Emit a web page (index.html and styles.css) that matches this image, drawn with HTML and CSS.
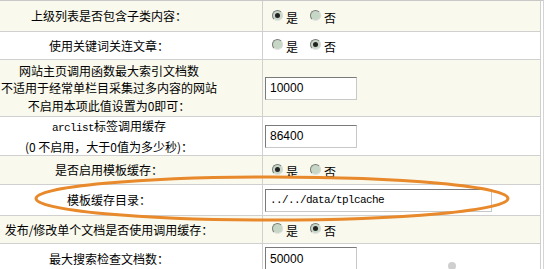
FILE: index.html
```
<!DOCTYPE html>
<html lang="zh-CN">
<head>
  <meta charset="UTF-8"/>
  <title>系统基本参数 - 性能选项</title>
  <link rel="stylesheet" href="styles.css">
</head>
<body>
  <div class="frame">
    <div class="row alt h1">
      <div class="label"><span>上级列表是否包含子类内容：</span></div>
      <div class="value">
        <label class="opt"><span class="radio on"></span>是</label>
        <label class="opt"><span class="radio"></span>否</label>
      </div>
    </div>
    <div class="row h2">
      <div class="label"><span>使用关键词关连文章：</span></div>
      <div class="value">
        <label class="opt"><span class="radio"></span>是</label>
        <label class="opt"><span class="radio on"></span>否</label>
      </div>
    </div>
    <div class="row alt h3">
      <div class="label"><span>网站主页调用函数最大索引文档数<br>不适用于经常单栏目采集过多内容的网站<br>不启用本项此值设置为0即可：</span></div>
      <div class="value"><input class="field" type="text" value="10000"></div>
    </div>
    <div class="row h4">
      <div class="label"><span><span class="mono">arclist</span>标签调用缓存<br>(0 不启用，大于0值为多少秒)：</span></div>
      <div class="value"><input class="field" type="text" value="86400"></div>
    </div>
    <div class="row alt h5">
      <div class="label"><span>是否启用模板缓存：</span></div>
      <div class="value">
        <label class="opt"><span class="radio on"></span>是</label>
        <label class="opt"><span class="radio"></span>否</label>
      </div>
    </div>
    <div class="row h6">
      <div class="label"><span>模板缓存目录：</span></div>
      <div class="value"><input class="field path" type="text" value="../../data/tplcache"></div>
    </div>
    <div class="row alt h7">
      <div class="label"><span>发布/修改单个文档是否使用调用缓存：</span></div>
      <div class="value">
        <label class="opt"><span class="radio"></span>是</label>
        <label class="opt"><span class="radio on"></span>否</label>
      </div>
    </div>
    <div class="row h8">
      <div class="label"><span>最大搜索检查文档数：</span></div>
      <div class="value"><input class="field" type="text" value="50000"></div>
    </div>
  </div>

  <!-- hand-drawn highlight around the template cache row -->
  <svg class="mark" width="549" height="269" viewBox="0 0 549 269">
    <ellipse cx="272" cy="198.5" rx="236" ry="21.5" fill="none" stroke="#e8892c" stroke-width="3"/>
  </svg>
  <span class="dot"></span>
</body>
</html>
```

FILE: styles.css
```
body{
  margin: 0;
  background: #fff;
  font-family: "Noto Sans CJK SC", "Noto Sans", sans-serif;
  font-size: 12px;
  color: #000;
  width: 549px;
  height: 269px;
  overflow: hidden;
  position: relative;
}
.frame{
  width: 544px;
  border-top: 1px solid #c8c8c8;
  border-right: 1px solid #d4d4d4;
  padding-right: 2px;
  box-sizing: border-box;
}
.row{
  display: flex;
  border-bottom: 1px solid #d0d0d0;
  border-right: 1px solid #d0d0d0;
  box-sizing: border-box;
  background: #fff;
}
.row.alt{
  background: #f9f9ed;
}
.h1{ height: 31px; }
.h2{ height: 28px; }
.h3{ height: 57px; }
.h4{ height: 39px; }
.h5{ height: 29px; }
.h6{ height: 31px; }
.h7{ height: 28px; }
.h8{ height: 30px; }
.label{
  width: 263px;
  flex: none;
  box-sizing: border-box;
  border-right: 1px solid #d0d0d0;
  padding-right: 44px;
  display: flex;
  align-items: center;
  justify-content: center;
  text-align: center;
  white-space: nowrap;
  line-height: 17.5px;
}
.mono{
  font-family: "Liberation Mono", monospace;
  font-size: 11px;
  letter-spacing: -0.6px;
}
.value{
  flex: 1;
  display: flex;
  align-items: center;
  padding-left: 2px;
}
.opt{
  display: inline-flex;
  align-items: center;
  gap: 3px;
  margin-left: 7px;
  margin-right: 5px;
  padding-top: 2px;
}
.radio{
  width: 11px;
  height: 11px;
  box-sizing: border-box;
  border-radius: 50%;
  border: 1px solid;
  border-color: #7c7c7c #d8d8d8 #e4e4e4 #7c7c7c;
  background: #c6d7c6;
  position: relative;
  margin-top: -4px;
}
.radio.on::after{
  content: "";
  position: absolute;
  left: 2px;
  top: 2px;
  width: 5px;
  height: 5px;
  border-radius: 50%;
  background: #222;
}
.field{
  width: 92px;
  height: 23px;
  box-sizing: border-box;
  border: 1px solid;
  border-color: #7a7a7a #c8c8c8 #c8c8c8 #7a7a7a;
  padding: 0 4px;
  font-family: "Liberation Sans", Arial, sans-serif;
  font-size: 12px;
  color: #000;
  background: #fff;
}
.field.path{
  width: 227px;
  font-family: "Liberation Mono", monospace;
  font-size: 11px;
  letter-spacing: -0.6px;
}
.mark{
  position: absolute;
  left: 0;
  top: 0;
  pointer-events: none;
}
.dot{
  position: absolute;
  left: 448px;
  top: 262px;
  width: 8px;
  height: 8px;
  border-radius: 50%;
  background: #cfcfcf;
}
```
